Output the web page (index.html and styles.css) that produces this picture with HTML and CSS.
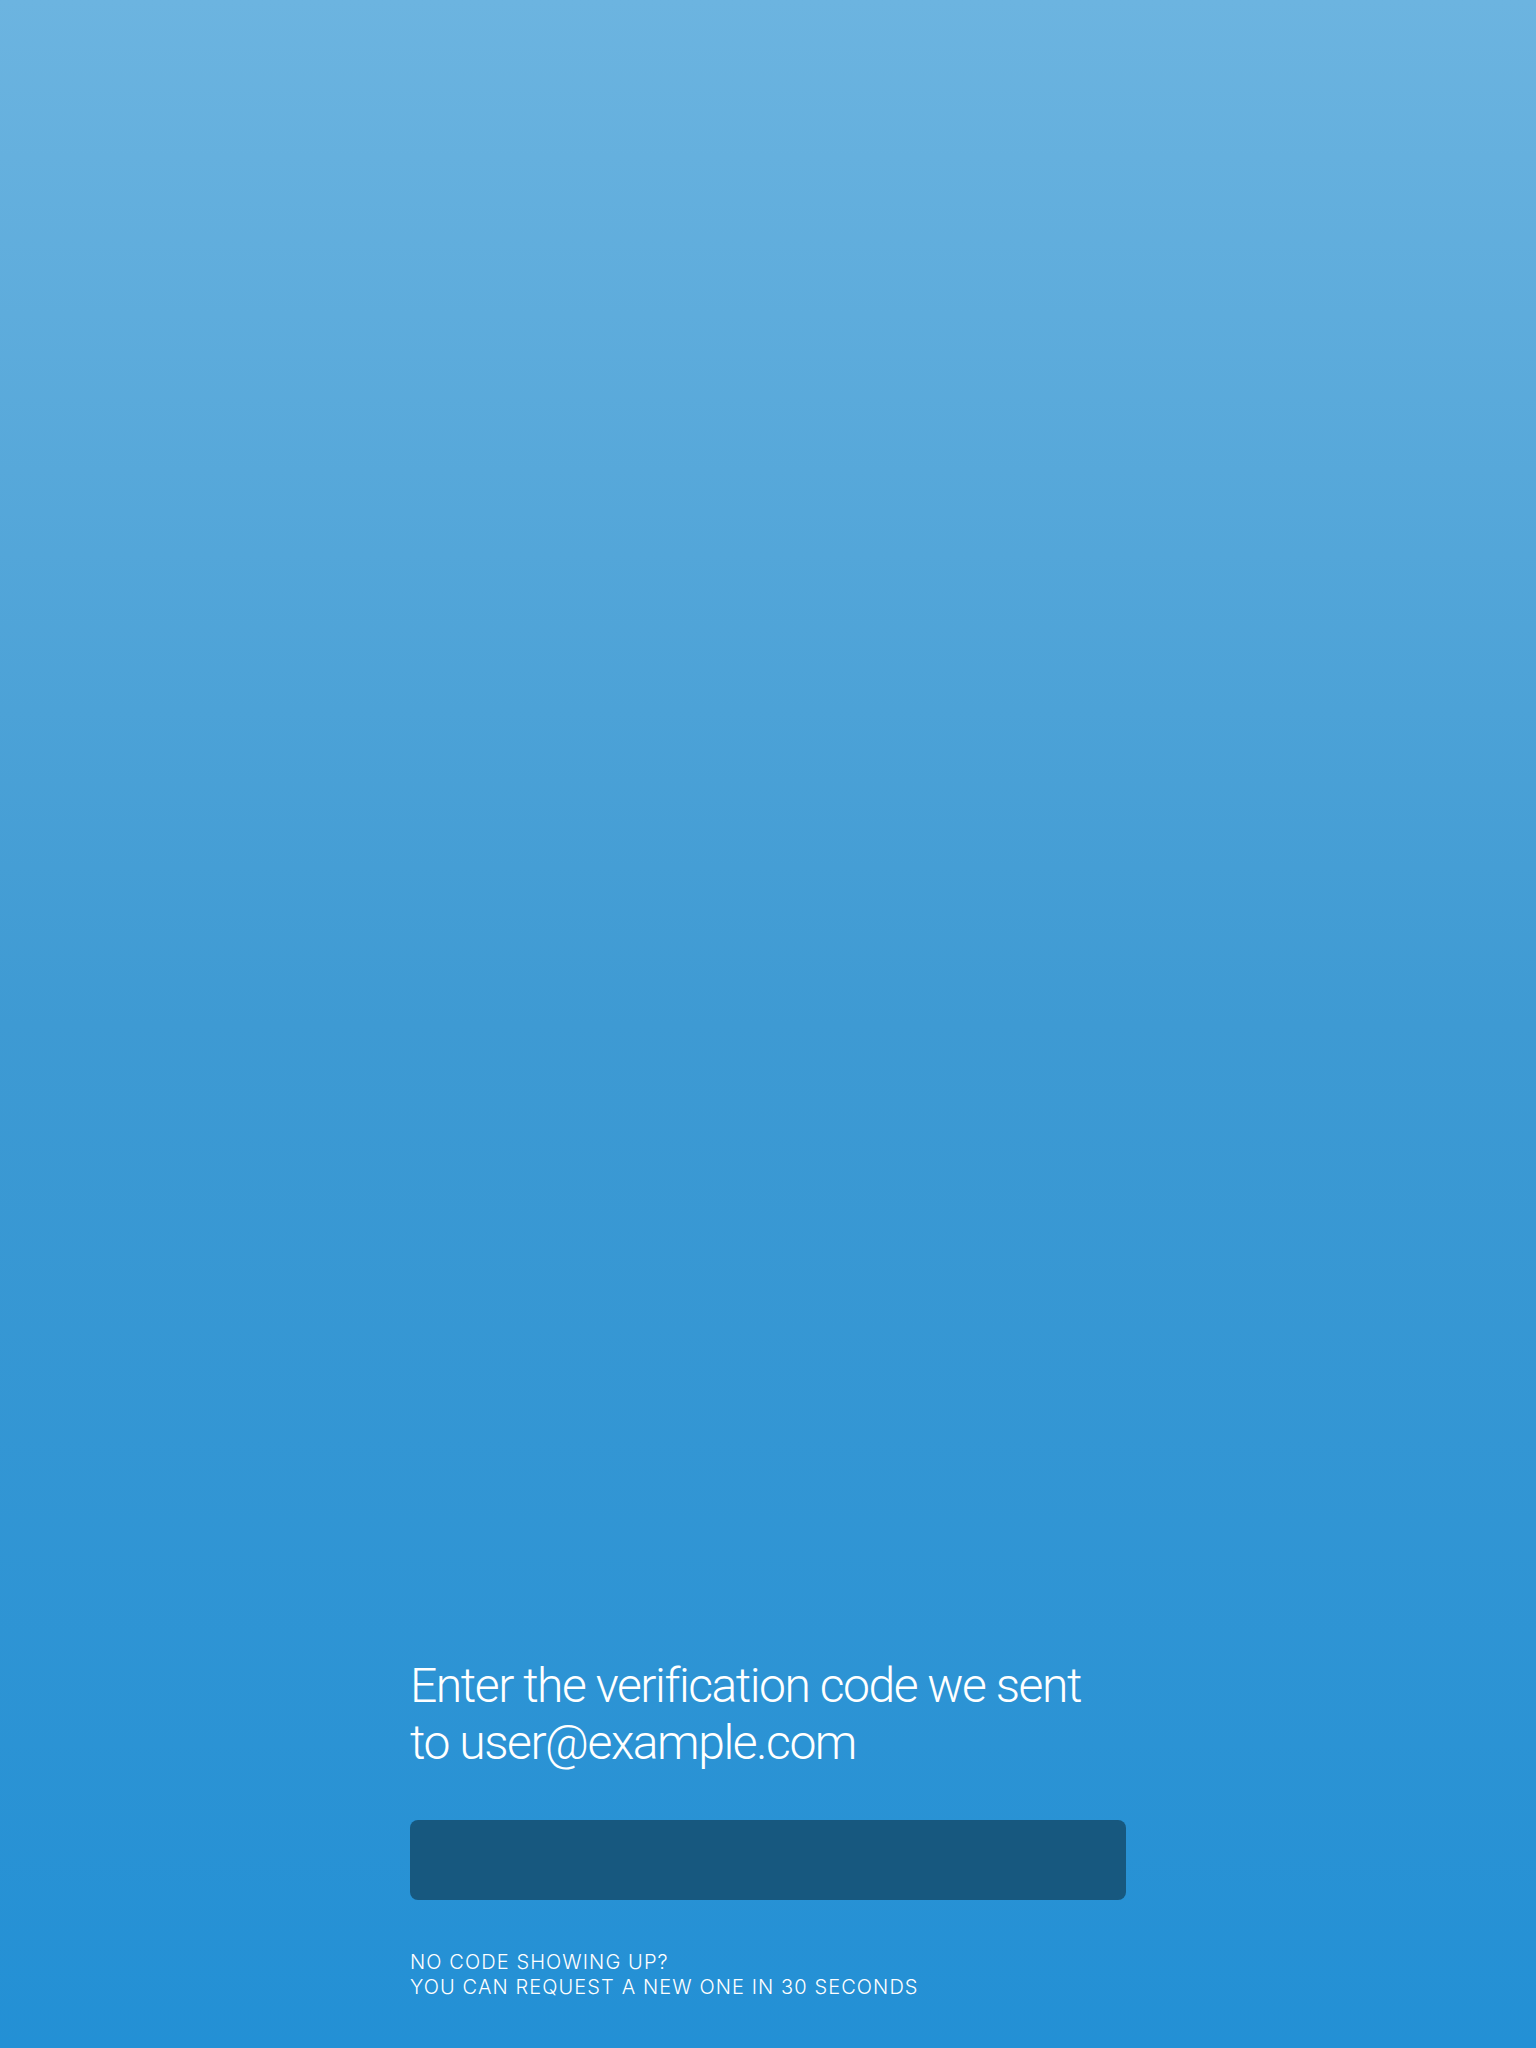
FILE: index.html
```html
<!DOCTYPE html>
<html lang="en">
<head>
<meta charset="utf-8">
<title>Verify</title>
<link rel="stylesheet" href="styles.css">
</head>
<body>
<main class="screen">
  <section class="verify">
    <h1 class="title">Enter the verification code we sent to user@example.com</h1>
    <div class="code-field"></div>
    <p class="hint">NO CODE SHOWING UP?<br>YOU CAN REQUEST A NEW ONE IN 30 SECONDS</p>
  </section>
</main>
</body>
</html>
```
FILE: styles.css
```css
html, body {
  margin: 0;
  padding: 0;
}
body {
  font-family: Inter, "Liberation Sans", sans-serif;
  color: #ffffff;
}
.screen {
  width: 1536px;
  height: 2048px;
  background: linear-gradient(to bottom, #6cb4e0 0%, #3e9ad3 50%, #2390d5 100%);
  display: flex;
  flex-direction: column;
  justify-content: flex-end;
  align-items: center;
  box-sizing: border-box;
  padding-bottom: 48px;
}
.verify {
  width: 716px;
}
.title {
  margin: 0;
  font-family: Roboto, "Liberation Sans", sans-serif;
  font-size: 48px;
  font-weight: 300;
  line-height: 57px;
  letter-spacing: -1.45px;
}
.code-field {
  margin-top: 49px;
  height: 80px;
  border-radius: 8px;
  background: #17587f;
}
.hint {
  margin: 50px 0 0;
  font-size: 20px;
  font-weight: 300;
  line-height: 25px;
  letter-spacing: 1.1px;
}
```
